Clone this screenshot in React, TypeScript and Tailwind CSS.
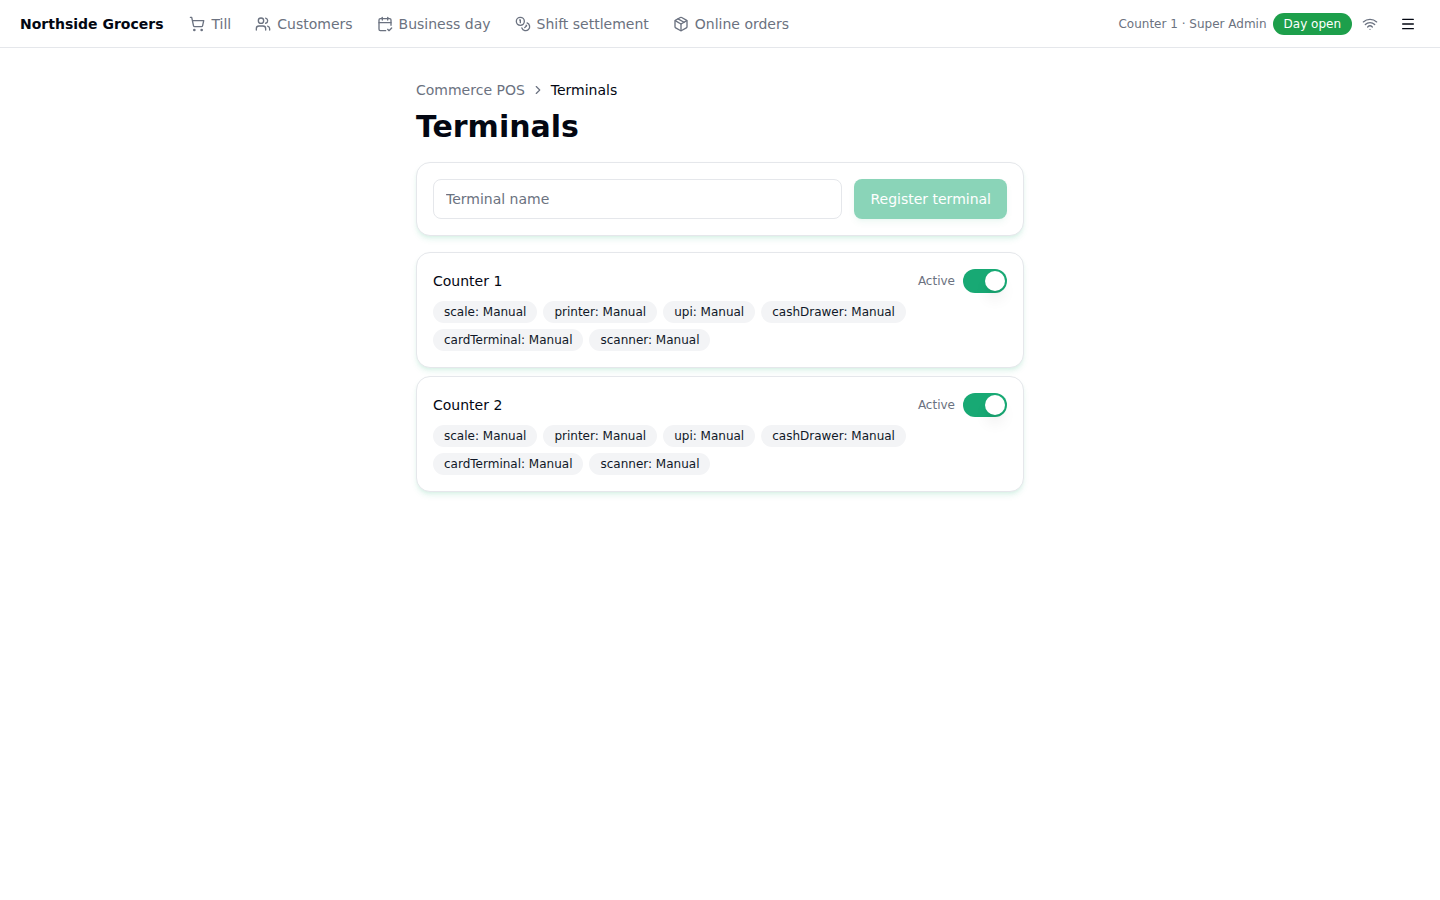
import { useState, type FormEvent } from 'react'
import {
  CalendarCheck2,
  ChevronRight,
  Coins,
  Menu,
  Package,
  ShoppingCart,
  Users,
  Wifi,
  type LucideIcon,
} from 'lucide-react'

type NavItem = { label: string; icon: LucideIcon }
type Terminal = { id: number; name: string; active: boolean }

const navItems: NavItem[] = [
  { label: 'Till', icon: ShoppingCart },
  { label: 'Customers', icon: Users },
  { label: 'Business day', icon: CalendarCheck2 },
  { label: 'Shift settlement', icon: Coins },
  { label: 'Online orders', icon: Package },
]

const devices = ['scale', 'printer', 'upi', 'cashDrawer', 'cardTerminal', 'scanner']

const cardClass =
  'rounded-[14px] border border-gray-200 bg-white p-4 shadow-[0_4px_6px_-1px_rgba(24,169,116,0.12),0_2px_4px_-2px_rgba(24,169,116,0.12)]'

function Header() {
  return (
    <header className="flex h-12 items-center justify-between border-b border-gray-200 px-3">
      <div className="flex items-center gap-4">
        <a href="#home" className="pl-2 text-sm font-bold whitespace-nowrap">
          Northside Grocers
        </a>
        <nav className="flex items-center gap-1" aria-label="Main">
          {navItems.map(({ label, icon: Icon }) => (
            <a
              key={label}
              href="#"
              className="flex items-center gap-1.5 px-2.5 py-1.5 text-sm whitespace-nowrap text-[#6b7280]"
            >
              <Icon className="size-4" />
              {label}
            </a>
          ))}
        </nav>
      </div>
      <div className="flex items-center gap-1.5">
        <span className="text-xs whitespace-nowrap text-[#6b7280]">Counter 1 · Super Admin</span>
        <span className="rounded-full border border-transparent bg-[#1d9f4b] px-2.5 py-0.5 text-xs whitespace-nowrap text-white">
          Day open
        </span>
        <span className="p-1 text-[#6b7280]">
          <Wifi className="size-4" />
        </span>
        <button type="button" aria-label="Menu" className="flex size-10 items-center justify-center">
          <Menu className="size-4" />
        </button>
      </div>
    </header>
  )
}

function TerminalCard({ terminal, onToggle }: { terminal: Terminal; onToggle: () => void }) {
  return (
    <li className={cardClass}>
      <div className="flex items-center justify-between">
        <h2 className="text-sm">{terminal.name}</h2>
        <label className="flex items-center gap-2 text-xs text-[#6b7280]">
          {terminal.active ? 'Active' : 'Inactive'}
          <input
            type="checkbox"
            role="switch"
            checked={terminal.active}
            onChange={onToggle}
            className="flex h-6 w-11 appearance-none items-center rounded-full bg-gray-200 p-0.5 before:size-5 before:rounded-full before:bg-white before:shadow-lg before:content-[''] checked:justify-end checked:bg-[#18a974]"
          />
        </label>
      </div>
      <ul className="mt-2 flex flex-wrap gap-1.5">
        {devices.map((device) => (
          <li
            key={device}
            className="rounded-full border border-transparent bg-gray-100 px-2.5 py-0.5 text-xs text-gray-900"
          >
            {device}: Manual
          </li>
        ))}
      </ul>
    </li>
  )
}

export default function App() {
  const [name, setName] = useState('')
  const [terminals, setTerminals] = useState<Terminal[]>([
    { id: 1, name: 'Counter 1', active: true },
    { id: 2, name: 'Counter 2', active: true },
  ])

  const register = (event: FormEvent) => {
    event.preventDefault()
    setTerminals([...terminals, { id: terminals.length + 1, name: name.trim(), active: true }])
    setName('')
  }

  const toggle = (id: number) =>
    setTerminals(terminals.map((t) => (t.id === id ? { ...t, active: !t.active } : t)))

  return (
    <div className="min-h-screen bg-white font-['DejaVu_Sans',sans-serif] text-gray-950">
      <Header />
      <main className="mx-auto flex max-w-2xl flex-col gap-4 p-8">
        <div className="flex flex-col gap-2">
          <nav aria-label="Breadcrumb" className="flex items-center gap-1.5 text-sm">
            <a href="#" className="text-[#6b7280]">
              Commerce POS
            </a>
            <ChevronRight className="size-3.5 text-[#6b7280]" />
            <span aria-current="page">Terminals</span>
          </nav>
          <h1 className="text-3xl leading-[38px] font-bold">Terminals</h1>
        </div>
        <form onSubmit={register} className={`${cardClass} flex gap-3`}>
          <input
            type="text"
            aria-label="Terminal name"
            placeholder="Terminal name"
            value={name}
            onChange={(event) => setName(event.target.value)}
            className="h-10 min-w-0 flex-1 rounded-lg border border-gray-200 px-3 text-sm placeholder:text-[#6b7280]"
          />
          <button
            type="submit"
            disabled={!name.trim()}
            className="h-10 rounded-lg bg-[#18ab74] px-4 text-sm whitespace-nowrap text-white shadow-[0_4px_6px_-1px_rgba(24,169,116,0.12),0_2px_4px_-2px_rgba(24,169,116,0.12)] disabled:opacity-50"
          >
            Register terminal
          </button>
        </form>
        <ul className="flex flex-col gap-2">
          {terminals.map((terminal) => (
            <TerminalCard key={terminal.id} terminal={terminal} onToggle={() => toggle(terminal.id)} />
          ))}
        </ul>
      </main>
    </div>
  )
}
